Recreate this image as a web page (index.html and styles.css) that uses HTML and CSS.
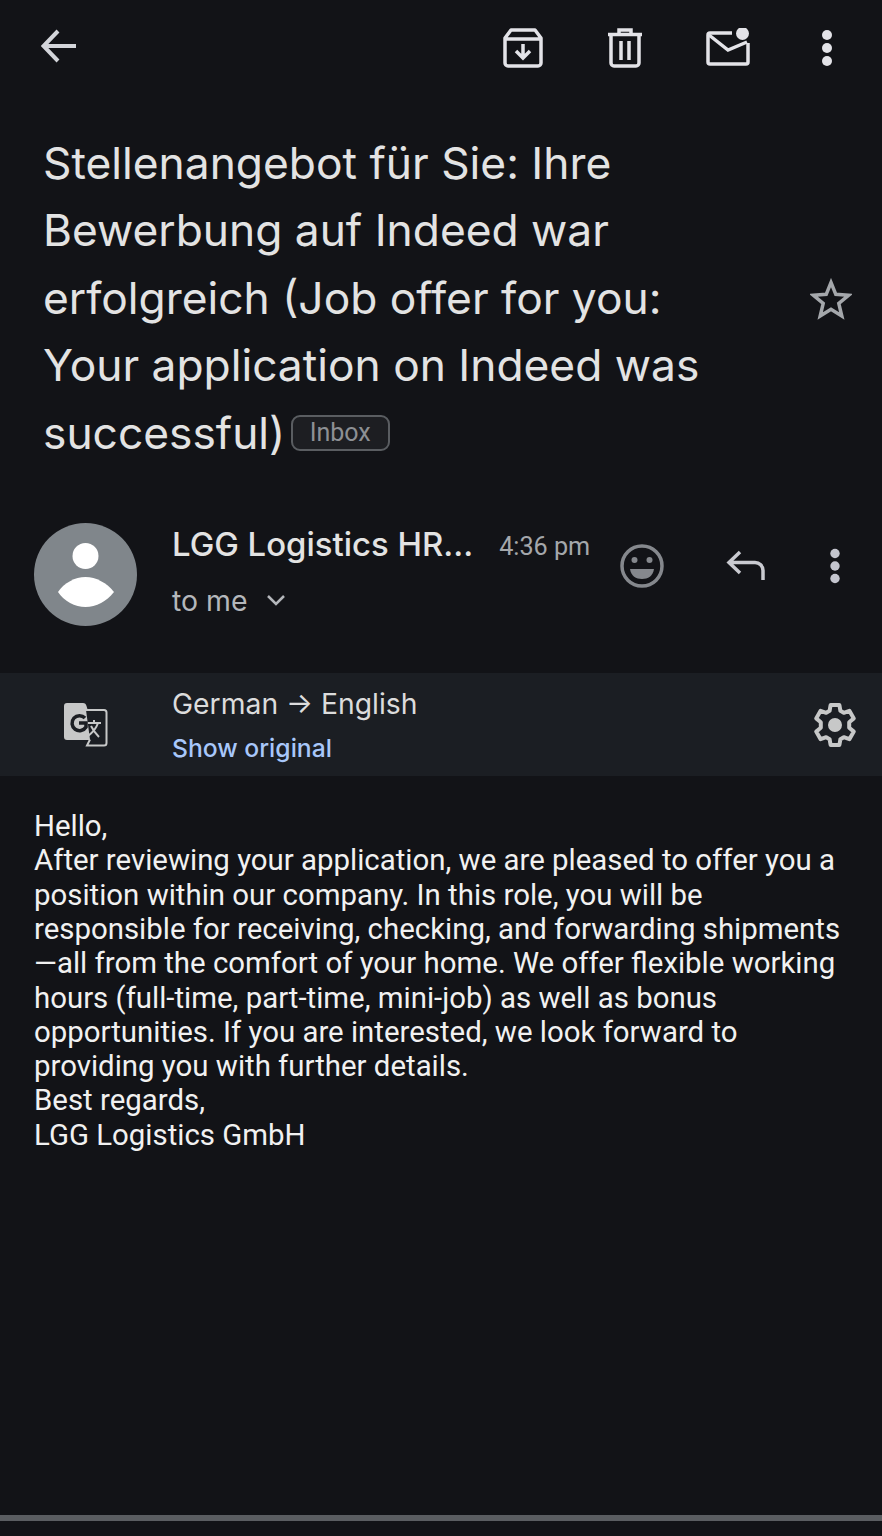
FILE: index.html
```html
<!DOCTYPE html>
<html lang="en">
<head>
    <meta charset="UTF-8">
    <meta name="viewport" content="width=device-width, initial-scale=1.0">
    <title>Email</title>
    <link rel="stylesheet" href="styles.css">
</head>
<body>

<header class="toolbar">
    <svg class="back-icon" width="36" height="36" viewBox="0 0 36 36"><path d="M35 18H3M17 3 2.500 18 17 33" fill="none" stroke="#d3d5da" stroke-width="4"/></svg>
    <div class="toolbar-actions">
        <div class="action">
            <svg width="40" height="40" viewBox="0 0 40 40"><path d="M8 2h24l6 8v25a3 3 0 0 1-3 3H5a3 3 0 0 1-3-3V10zM2 11h36" fill="none" stroke="#e3e3e8" stroke-width="3.500" stroke-linejoin="round"/><path d="M20 16v13M13 23l7 7 7-7" fill="none" stroke="#e3e3e8" stroke-width="3.500"/></svg>
        </div>
        <div class="action">
            <svg width="36" height="40" viewBox="0 0 36 40"><path d="M1 6.500h34M12 6V2h12v4" fill="none" stroke="#e3e3e8" stroke-width="3.500"/><path d="M4 7v28a3 3 0 0 0 3 3h22a3 3 0 0 0 3-3V7M14 13v19M22 13v19" fill="none" stroke="#e3e3e8" stroke-width="3.500"/></svg>
        </div>
        <div class="action action-mail">
            <svg width="44" height="40" viewBox="0 0 44 40"><path d="M26 5H4a2 2 0 0 0-2 2v27a2 2 0 0 0 2 2h36a2 2 0 0 0 2-2V15" fill="none" stroke="#e3e3e8" stroke-width="3.500"/><path d="M3 7l19 15 19-8" fill="none" stroke="#e3e3e8" stroke-width="3.500"/><circle cx="36.500" cy="5.500" r="6.500" fill="#e3e3e8"/></svg>
        </div>
        <div class="action">
            <svg width="12" height="38" viewBox="0 0 12 38"><circle cx="6" cy="6" r="5" fill="#e3e3e8"/><circle cx="6" cy="19" r="5" fill="#e3e3e8"/><circle cx="6" cy="32" r="5" fill="#e3e3e8"/></svg>
        </div>
    </div>
</header>

<section class="subject">
    <h1>Stellenangebot für Sie: Ihre Bewerbung auf Indeed war erfolgreich (Job offer for you: Your application on Indeed was successful) <span class="chip">Inbox</span></h1>
    <svg class="star" width="42" height="42" viewBox="0 0 42 42"><path d="M21 4.500 25.800 16.300 38.500 17.300 28.800 25.500 31.800 38 21 31.300 10.200 38 13.200 25.500 3.500 17.300 16.200 16.300Z" fill="none" stroke="#a4a7ab" stroke-width="3.500"/></svg>
</section>

<section class="sender">
    <svg class="avatar" width="103" height="103" viewBox="0 0 103 103"><circle cx="51.500" cy="51.500" r="51.500" fill="#80868b"/><circle cx="51.500" cy="33" r="13" fill="#fff"/><path d="M24 69C30 60 41 54 51.500 54S73 60 80 69C73 78 62 84 51.500 84S30 78 24 69Z" fill="#fff"/></svg>
    <div class="sender-info">
        <div class="sender-top">
            <span class="sender-name">LGG Logistics HR...</span>
            <span class="sender-time">4:36 pm</span>
        </div>
        <div class="sender-to">
            to me
            <svg width="20" height="12" viewBox="0 0 20 12"><path d="M2 2l8 8 8-8" fill="none" stroke="#b4b7bb" stroke-width="2.500"/></svg>
        </div>
    </div>
    <div class="sender-actions">
        <svg width="46" height="46" viewBox="0 0 46 46"><circle cx="23" cy="23" r="20" fill="none" stroke="#85888d" stroke-width="3.500"/><circle cx="15.500" cy="17" r="3" fill="#85888d"/><circle cx="30.500" cy="17" r="3" fill="#85888d"/><path d="M11 26h24c-1 7-6 10-12 10s-11-3-12-10Z" fill="#85888d"/></svg>
        <svg class="reply" width="40" height="32" viewBox="0 0 40 32"><path d="M14 2 3 12.500 14 23M3 12.500h26a8 8 0 0 1 8 8V30" fill="none" stroke="#c9cad0" stroke-width="3.500"/></svg>
        <svg class="more" width="12" height="36" viewBox="0 0 12 36"><circle cx="6" cy="5.500" r="4.700" fill="#c4c5ce"/><circle cx="6" cy="18" r="4.700" fill="#c4c5ce"/><circle cx="6" cy="30.500" r="4.700" fill="#c4c5ce"/></svg>
    </div>
</section>

<section class="translate">
    <svg class="translate-icon" width="44" height="44" viewBox="0 0 44 44">
        <path d="M3 0h16c2 0 3 1 3.500 3L33 37H3a3 3 0 0 1-3-3V3a3 3 0 0 1 3-3Z" fill="#c7c8c8"/>
        <path d="M22 7h18a2.500 2.500 0 0 1 2.500 2.500V40a2.500 2.500 0 0 1-2.500 2.500H23l3-6" fill="#1b1e23" stroke="#c7c8c8" stroke-width="2"/>
        <path d="M23 20h14M30 17v3M34 20c-2 6-6 10-10 13M27 23c2 4 5 8 8 11" fill="none" stroke="#c7c8c8" stroke-width="2"/>
        <path d="M21 15a7.500 7.500 0 1 0 1 9v-4h-7" fill="none" stroke="#1b1e23" stroke-width="3.500"/>
    </svg>
    <div class="translate-text">
        <div class="translate-langs">German → English</div>
        <div class="translate-link">Show original</div>
    </div>
    <svg class="gear" width="48" height="48" viewBox="0 0 24 24"><path d="M12 8.500a3.500 3.500 0 1 0 0 7 3.500 3.500 0 0 0 0-7Z" fill="#c7c8c8"/><path d="M9.800 2h4.400l.5 2.900 1.700 1 2.800-1 2.200 3.800-2.300 1.900v2.800l2.300 1.900-2.200 3.800-2.800-1-1.700 1-.5 2.900H9.800l-.5-2.900-1.700-1-2.800 1-2.200-3.800 2.300-1.900v-2.800L2.600 8.700l2.200-3.800 2.800 1 1.700-1Z" fill="none" stroke="#c7c8c8" stroke-width="2" stroke-linejoin="round"/></svg>
</section>

<section class="message">
    Hello,<br>
    After reviewing your application, we are pleased to offer you a position within our company. In this role, you will be responsible for receiving, checking, and forwarding shipments —all from the comfort of your home. We offer flexible working hours (full-time, part-time, mini-job) as well as bonus opportunities. If you are interested, we look forward to providing you with further details.<br>
    Best regards,<br>
    LGG Logistics GmbH
</section>

<div class="home-bar"></div>

</body>
</html>
```

FILE: styles.css
```css
body {
    font-family: 'Inter', sans-serif;
    background-color: #121317;
    margin: 0;
    padding: 0;
    color: #e3e3e3;
    min-height: 1536px;
    display: flex;
    flex-direction: column;
}

svg {
    display: block;
    flex-shrink: 0;
}

.toolbar {
    display: flex;
    align-items: center;
    justify-content: space-between;
    height: 95px;
    padding: 0 4px 0 41px;
}

.back-icon {
    margin-bottom: 3px;
}

.toolbar-actions {
    display: flex;
    align-items: center;
}

.action {
    width: 102px;
    display: flex;
    justify-content: center;
}

.action-mail {
    padding-left: 5px;
    width: 95.5px;
}

.subject {
    display: flex;
    align-items: center;
    justify-content: space-between;
    padding: 35px 30px 0 43px;
}

.subject h1 {
    margin: 0;
    width: 700px;
    font-family: 'Inter', sans-serif;
    font-size: 44.3px;
    line-height: 67.4px;
    font-weight: 400;
    color: #e3e3e3;
}

.chip {
    display: inline-block;
    vertical-align: 8px;
    margin-left: -7px;
    padding: 0 17px;
    height: 32px;
    line-height: 32px;
    font-family: 'Roboto', sans-serif;
    font-size: 25px;
    color: #8d9094;
    border: 2px solid #5a5d61;
    border-radius: 9px;
    background-color: #1d1e22;
}

.sender {
    display: flex;
    align-items: flex-start;
    height: 103px;
    margin-top: 56px;
    padding-left: 34px;
}

.sender-info {
    margin-left: 35px;
    width: 447px;
}

.sender-top {
    display: flex;
    align-items: center;
    gap: 26px;
    height: 42px;
}

.sender-name {
    font-size: 32.9px;
    font-weight: 500;
    color: #e3e3e3;
    white-space: nowrap;
}

.sender-time {
    font-family: 'Roboto', sans-serif;
    font-size: 25.2px;
    color: #a4a7ab;
    margin-top: 5px;
}

.sender-to {
    display: flex;
    align-items: center;
    gap: 19px;
    height: 40px;
    margin-top: 15px;
    font-size: 28.4px;
    color: #b4b7bb;
}

.sender-actions {
    display: flex;
    align-items: center;
    padding-top: 20px;
}

.reply {
    margin-left: 61px;
}

.more {
    margin-left: 63px;
}

.translate {
    display: flex;
    align-items: center;
    height: 103px;
    margin-top: 47px;
    padding: 0 23px 0 64px;
    background-color: #1b1e23;
}

.translate-text {
    flex: 1;
    margin-left: 64px;
    padding-top: 4px;
}

.translate-langs {
    font-size: 28.3px;
    color: #dcdcdc;
    line-height: 42px;
}

.translate-link {
    font-size: 24.7px;
    font-weight: 500;
    color: #a8c7fa;
    line-height: 46px;
}

.message {
    padding: 33px 34px 0;
    font-family: 'Roboto', sans-serif;
    font-size: 29.4px;
    line-height: 34.3px;
    color: #f1f1f1;
}

.home-bar {
    margin-top: auto;
    margin-bottom: 15px;
    height: 6px;
    background-color: #5a5d61;
}
```
